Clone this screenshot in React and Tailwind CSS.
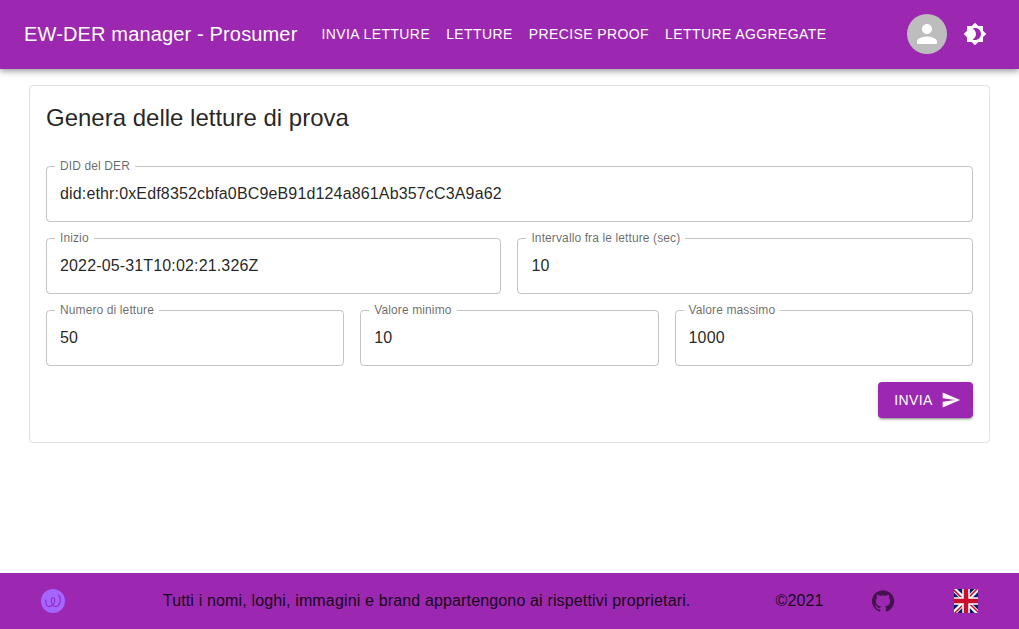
function Icon({ d, className }) {
  return (
    <svg viewBox="0 0 24 24" fill="currentColor" className={className} aria-hidden="true">
      <path d={d} />
    </svg>
  );
}

const PERSON =
  "M12 12c2.21 0 4-1.79 4-4s-1.79-4-4-4-4 1.79-4 4 1.79 4 4 4zm0 2c-2.67 0-8 1.34-8 4v2h16v-2c0-2.66-5.33-4-8-4z";
const BRIGHTNESS =
  "M20 8.69V4h-4.69L12 .69 8.69 4H4v4.69L.69 12 4 15.31V20h4.69L12 23.31 15.31 20H20v-4.69L23.31 12 20 8.69zM12 18c-.89 0-1.74-.2-2.5-.55C11.56 16.5 13 14.42 13 12s-1.44-4.5-3.5-5.45C10.26 6.2 11.11 6 12 6c3.31 0 6 2.69 6 6s-2.69 6-6 6z";
const SEND = "M2.01 21 23 12 2.01 3 2 10l15 2-15 2z";
const GITHUB =
  "M12 1.27a11 11 0 00-3.48 21.46c.55.09.73-.28.73-.55v-1.84c-3.03.64-3.67-1.46-3.67-1.46-.55-1.29-1.28-1.65-1.28-1.65-.92-.65.1-.65.1-.65 1.1 0 1.73 1.1 1.73 1.1.92 1.65 2.57 1.2 3.21.92a2 2 0 01.64-1.47c-2.47-.27-5.04-1.19-5.04-5.5 0-1.1.46-2.1 1.2-2.84a3.76 3.76 0 010-2.93s.91-.28 3.11 1.1c1.8-.49 3.7-.49 5.5 0 2.1-1.38 3.02-1.1 3.02-1.1a3.76 3.76 0 01.1 2.93c.83.74 1.2 1.74 1.2 2.94 0 4.21-2.57 5.13-5.04 5.4.45.37.82.92.82 2.02v3.03c0 .27.1.64.73.55A11 11 0 0012 1.27";

const NAV = ["Invia letture", "Letture", "Precise proof", "Letture aggregate"];

function Field({ label, value }) {
  return (
    <fieldset className="-mt-2 min-w-0 flex-1 basis-0 rounded border border-black/23 pl-2">
      <legend className="h-[17px] px-[5px] text-xs leading-[17px] tracking-[0.00938em] text-black/60">
        {label}
      </legend>
      <input
        aria-label={label}
        defaultValue={value}
        className="block h-[46px] w-full bg-transparent pb-[9px] pl-[5px] text-base tracking-[0.00938em] outline-none"
      />
    </fieldset>
  );
}

function Logo() {
  return (
    <svg viewBox="0 0 24 24" className="size-6" aria-hidden="true">
      <circle cx="12" cy="12" r="12" fill="#a466ff" />
      <path
        d="M4.600 11c0 4 1.600 6.600 3.800 6.600 2.700 0 5.300-3 5.300-6.200 0-1.700-.7-2.700-1.700-2.700s-1.800 1-1.800 2.700c0 3.200 1.900 6.200 4.600 6.200 2.500 0 4.500-3 4.500-6.400 0-2.300-.7-4.200-1.900-5.200"
        fill="none"
        stroke="#9229c4"
        strokeWidth="1.1"
        strokeLinecap="round"
      />
    </svg>
  );
}

function Flag() {
  return (
    <svg viewBox="0 0 512 512" className="size-6" aria-hidden="true">
      <path fill="#012169" d="M0 0h512v512H0z" />
      <path
        fill="#fff"
        d="M512 0v64L322 256l190 187v69h-67L254 324 68 512H0v-68l186-187L0 74V0h62l192 188L440 0z"
      />
      <path
        fill="#c8102e"
        d="m184 324 11 34L42 512H0v-3zm124-12 54 8 150 147v45zM512 0 320 196l-4-44L466 0zM0 1l193 189-59-8L0 49z"
      />
      <path fill="#fff" d="M176 0v512h160V0zM0 176v160h512V176z" />
      <path fill="#c8102e" d="M0 208v96h512v-96zM208 0v512h96V0z" />
    </svg>
  );
}

export default function App() {
  return (
    <div className="flex h-screen flex-col bg-white font-['Liberation_Sans',sans-serif] text-black/87">
      <header className="flex h-[69px] shrink-0 items-center bg-[#9c27b0] px-6 pb-px text-white shadow-[0px_2px_4px_-1px_rgba(0,0,0,0.2),0px_4px_5px_0px_rgba(0,0,0,0.14),0px_1px_10px_0px_rgba(0,0,0,0.12)]">
        <h1 className="text-xl tracking-[0.0075em] whitespace-nowrap">EW-DER manager - Prosumer</h1>
        <nav className="ml-4 flex flex-1">
          {NAV.map((item) => (
            <a key={item} className="px-2 text-sm leading-6 tracking-[0.02857em] whitespace-nowrap uppercase">
              {item}
            </a>
          ))}
        </nav>
        <div className="flex size-10 items-center justify-center rounded-full bg-[#bdbdbd]">
          <Icon d={PERSON} className="size-[30px]" />
        </div>
        <button className="mr-2 ml-4" aria-label="Tema">
          <Icon d={BRIGHTNESS} className="size-6" />
        </button>
      </header>

      <main className="flex-1 pt-4 pr-[29.2px] pl-[29px]">
        <section className="rounded border border-black/12 px-4 pt-4 pb-6">
          <h2 className="text-2xl leading-8">Genera delle letture di prova</h2>
          <form className="mt-8 flex flex-col gap-4">
            <div className="flex">
              <Field label="DID del DER" value="did:ethr:0xEdf8352cbfa0BC9eB91d124a861Ab357cC3A9a62" />
            </div>
            <div className="flex gap-4">
              <Field label="Inizio" value="2022-05-31T10:02:21.326Z" />
              <Field label="Intervallo fra le letture (sec)" value="10" />
            </div>
            <div className="flex gap-4">
              <Field label="Numero di letture" value="50" />
              <Field label="Valore minimo" value="10" />
              <Field label="Valore massimo" value="1000" />
            </div>
            <button
              type="button"
              className="flex h-9 items-center gap-2 self-end rounded bg-[#9c27b0] pr-3 pl-4 text-sm tracking-[0.02857em] text-white uppercase shadow-[0px_3px_1px_-2px_rgba(0,0,0,0.2),0px_2px_2px_0px_rgba(0,0,0,0.14),0px_1px_5px_0px_rgba(0,0,0,0.12)]"
            >
              Invia
              <Icon d={SEND} className="size-5" />
            </button>
          </form>
        </section>
      </main>

      <footer className="flex h-14 shrink-0 items-center bg-[#9c27b0] pr-[41px] pl-[41px] tracking-[0.00938em]">
        <Logo />
        <p className="ml-[97.8px] whitespace-nowrap">
          Tutti i nomi, loghi, immagini e brand appartengono ai rispettivi proprietari.
        </p>
        <p className="ml-auto">©2021</p>
        <Icon d={GITHUB} className="mr-[59px] ml-[47.4px] size-6 text-black/54" />
        <Flag />
      </footer>
    </div>
  );
}
